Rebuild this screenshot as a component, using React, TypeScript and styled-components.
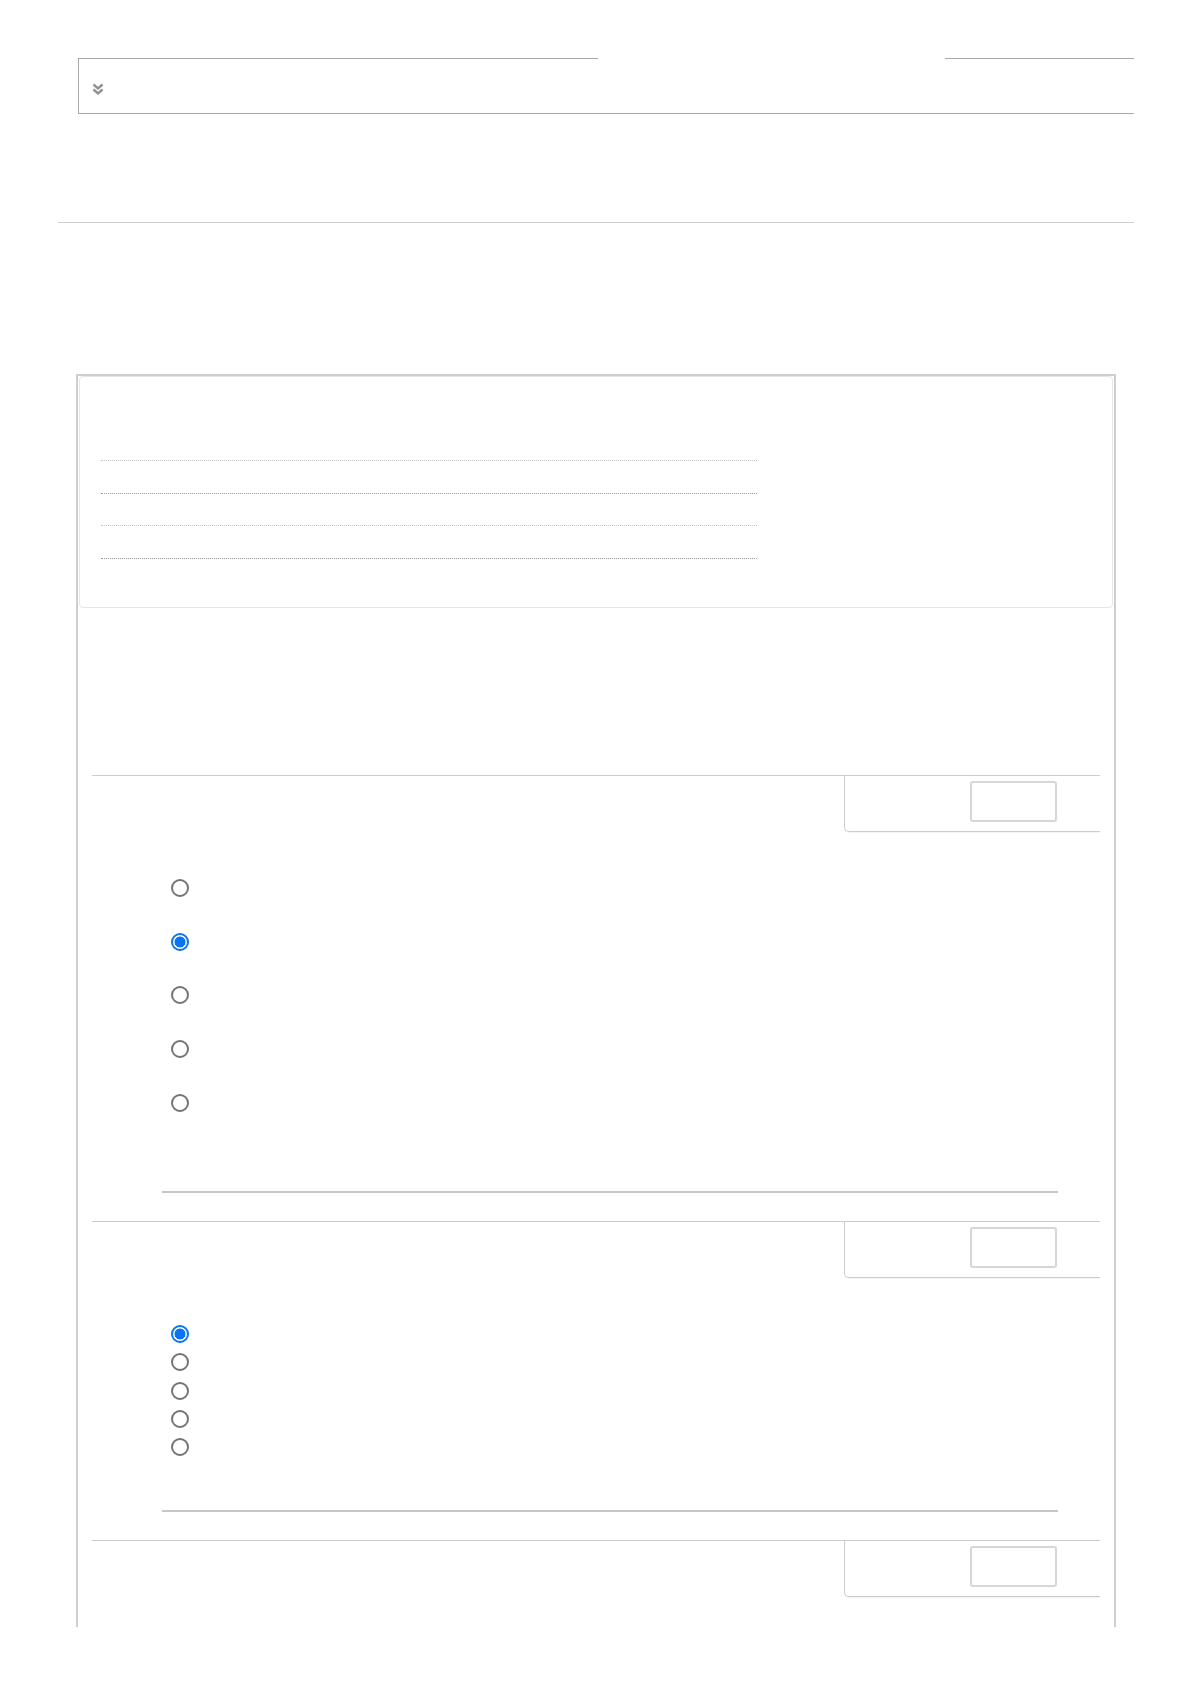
import styled, { createGlobalStyle } from 'styled-components'

const GlobalStyle = createGlobalStyle`
  body {
    margin: 0;
    background: #fff;
    font-family: "Liberation Sans", Arial, sans-serif;
    font-size: 15px;
    color: #333;
  }
`

type Question = {
  id: number
  options: number
  selected: number
  roomy: boolean
  outcome: boolean
}

const questions: Question[] = [
  { id: 1, options: 5, selected: 1, roomy: true, outcome: true },
  { id: 2, options: 5, selected: 0, roomy: false, outcome: true },
  { id: 3, options: 0, selected: -1, roomy: false, outcome: false },
]

const summaryRows = [0, 1, 2, 3]

const ExpandIcon = () => (
  <svg width="12" height="13" viewBox="0 0 12 13" aria-hidden="true">
    <polyline points="1.5,1.5 6,5.5 10.5,1.5" fill="none" stroke="#919191" strokeWidth="2.4" />
    <polyline points="1.5,6.5 6,10.5 10.5,6.5" fill="none" stroke="#919191" strokeWidth="2.4" />
  </svg>
)

export default function App() {
  return (
    <>
      <GlobalStyle />
      <Page>
        <CollapseBar>
          <CollapseLegend />
          <ExpandIcon />
        </CollapseBar>

        <Rule />

        <Panel>
          <Summary>
            <SummaryTable>
              {summaryRows.map(r => (
                <SummaryRow key={r} />
              ))}
            </SummaryTable>
          </Summary>

          <QuestionList>
            {questions.map(q => (
              <QuestionBlock key={q.id}>
                <QuestionHead>
                  <InfoBox>
                    <GradeBox />
                  </InfoBox>
                </QuestionHead>

                {q.options > 0 && (
                  <Answers>
                    {Array.from({ length: q.options }).map((_, i) => (
                      <AnswerRow key={i} $roomy={q.roomy}>
                        <Radio
                          type="radio"
                          name={`q${q.id}`}
                          defaultChecked={i === q.selected}
                        />
                      </AnswerRow>
                    ))}
                  </Answers>
                )}

                {q.outcome && <Outcome />}
              </QuestionBlock>
            ))}
          </QuestionList>
        </Panel>
      </Page>
    </>
  )
}

const Page = styled.div`
  width: 1076px;
  margin-left: 58px;
  padding-top: 58px;
`

const CollapseBar = styled.fieldset`
  margin: 0 0 0 20px;
  min-width: 0;
  border: 1px solid #a8a8a8;
  border-right: none;
  padding: 24px 0 17px 13px;
  display: flex;
  align-items: center;

  svg {
    display: block;
  }
`

const CollapseLegend = styled.legend`
  width: 347px;
  height: 1px;
  margin-left: 506px;
  padding: 0;
  font-size: 0;
  line-height: 0;
`

const Rule = styled.hr`
  margin: 108px 0 0;
  border: 0;
  border-top: 1px solid #cfcfcf;
  height: 0;
`

const Panel = styled.div`
  margin: 151px 18px 0;
  border: 2px solid #cecece;
  border-bottom: none;
  padding-bottom: 30px;
`

const Summary = styled.div`
  margin: 0 1px;
  border: 1px solid #e6e6e6;
  border-radius: 4px;
  padding: 51.5px 20px 48.5px 21px;
`

const SummaryTable = styled.div`
  width: 656px;
`

const SummaryRow = styled.div`
  height: 31.5px;
  border-bottom: 1px dotted #c4c4c4;

  &:nth-child(even) {
    border-bottom-color: #9c9c9c;
  }
`

const QuestionList = styled.div`
  margin-top: 167px;
  display: flex;
  flex-direction: column;
  gap: 28px;
`

const QuestionBlock = styled.div`
  margin: 0 14px;
  border-top: 1px solid #cccccc;
`

const QuestionHead = styled.div`
  display: flex;
  justify-content: flex-end;
`

const InfoBox = styled.div`
  box-sizing: border-box;
  width: 256px;
  height: 56px;
  border-left: 1px solid #cccccc;
  border-bottom: 1px solid #cccccc;
  border-bottom-left-radius: 5px;
  box-shadow: 0 1px 1px rgba(0, 0, 0, 0.05);
  padding: 5px 43px 0 0;
  display: flex;
  justify-content: flex-end;
  align-items: flex-start;
`

const GradeBox = styled.div`
  box-sizing: border-box;
  width: 87px;
  height: 41px;
  border: 2px solid #d6d6d6;
  border-radius: 3px;
`

const Answers = styled.div`
  margin-top: 41.8px;
  padding-left: 79px;
  display: flex;
  flex-direction: column;
`

const AnswerRow = styled.div<{ $roomy: boolean }>`
  height: 28.4px;
  padding-bottom: ${props => (props.$roomy ? 25.35 : 0)}px;
  display: flex;
  align-items: center;
`

const Radio = styled.input`
  appearance: none;
  box-sizing: border-box;
  width: 18px;
  height: 18px;
  margin: 0;
  border: 2px solid #747474;
  border-radius: 50%;
  background: #fff;

  &:checked {
    border: 2px solid #0a74f5;
    background: radial-gradient(circle, #0a74f5 0 5.2px, #fff 5.8px);
  }
`

const Outcome = styled.div`
  margin: 48.45px 42px 0 70px;
  height: 2px;
  background: #c8c8c8;
`
